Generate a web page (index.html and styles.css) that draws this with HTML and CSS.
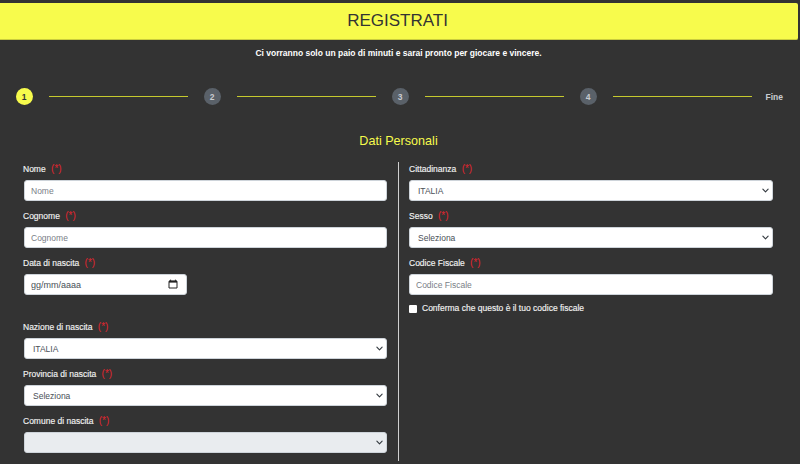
FILE: index.html
```html
<!DOCTYPE html>
<html lang="it">
<head>
<meta charset="utf-8">
<title>Registrati</title>
<link rel="stylesheet" href="styles.css">
</head>
<body>
<header class="banner"><h1 class="banner-title">REGISTRATI</h1></header>
<p class="intro">Ci vorranno solo un paio di minuti e sarai pronto per giocare e vincere.</p>
<ol class="steps">
  <li class="step step-active">1</li><li class="line"></li>
  <li class="step">2</li><li class="line"></li>
  <li class="step">3</li><li class="line"></li>
  <li class="step">4</li><li class="line"></li>
  <li class="step-end">Fine</li>
</ol>
<h2 class="section-title">Dati Personali</h2>
<form class="form">
  <div class="col col-left">
    <div class="field"><label class="label">Nome <span class="req">(*)</span></label><input class="control" placeholder="Nome"></div>
    <div class="field"><label class="label">Cognome <span class="req">(*)</span></label><input class="control" placeholder="Cognome"></div>
    <div class="field field-gap"><label class="label">Data di nascita <span class="req">(*)</span></label>
      <div class="date-wrap"><input class="control control-date" placeholder="gg/mm/aaaa">
        <svg class="cal" viewBox="0 0 10 10" width="10" height="10" aria-hidden="true"><path d="M1 2.2h8v6.8H1z" fill="none" stroke="#222" stroke-width="1"/><path d="M1 1.6h8v2H1z" fill="#222"/><path d="M2.6.6v1.4M7.4.6v1.4" stroke="#222" stroke-width=".9"/></svg>
      </div></div>
    <div class="field"><label class="label">Nazione di nascita <span class="req">(*)</span></label><select class="control select"><option>ITALIA</option></select></div>
    <div class="field"><label class="label">Provincia di nascita <span class="req">(*)</span></label><select class="control select"><option>Seleziona</option></select></div>
    <div class="field"><label class="label">Comune di nascita <span class="req">(*)</span></label><select class="control select select-off" disabled><option></option></select></div>
  </div>
  <div class="col col-right">
    <div class="field"><label class="label">Cittadinanza <span class="req">(*)</span></label><select class="control select"><option>ITALIA</option></select></div>
    <div class="field"><label class="label">Sesso <span class="req">(*)</span></label><select class="control select"><option>Seleziona</option></select></div>
    <div class="field"><label class="label">Codice Fiscale <span class="req">(*)</span></label><input class="control" placeholder="Codice Fiscale"></div>
    <label class="check"><input type="checkbox" class="check-box"><span>Conferma che questo è il tuo codice fiscale</span></label>
  </div>
</form>
</body>
</html>
```
FILE: styles.css
```css
* { box-sizing: border-box; }
html, body { margin: 0; height: 100%; overflow: hidden; }
body {
  background: #333333;
  color: #fff;
  font-family: "Liberation Sans", Arial, sans-serif;
  padding-top: 3px;
}
.banner {
  height: 37px;
  margin-right: 2px;
  background: #f7fb4c;
  border-bottom: 1px solid #c9cc3e;
  border-radius: 0 2px 2px 0;
  display: flex;
  align-items: center;
  justify-content: center;
}
.banner-title {
  margin: 0 3px 0 0;
  font-size: 17px;
  font-weight: 400;
  color: #333;
}
.intro {
  margin: 7px 3px 0 0;
  text-align: center;
  font-size: 8.5px;
  line-height: 12px;
  font-weight: 700;
}
.steps {
  list-style: none;
  margin: 29px 0 0;
  padding: 0 17px 0 15.5px;
  display: flex;
  align-items: center;
  height: 17px;
}
.step {
  width: 17px;
  height: 17px;
  flex: none;
  border-radius: 50%;
  background: #5a6169;
  color: #c9ccd0;
  font-size: 8.5px;
  font-weight: 700;
  display: flex;
  align-items: center;
  justify-content: center;
}
.step-active { background: #f7fb4c; color: #333; }
.line {
  flex: 1;
  height: 1px;
  margin: 0 16px;
  background: #c6ca2e;
}
.step-end {
  flex: none;
  margin-left: -2px;
  font-size: 8.5px;
  font-weight: 700;
  color: #c9ccd0;
}
.section-title {
  margin: 28px 3px 0 0;
  text-align: center;
  font-size: 12.6px;
  line-height: 17px;
  font-weight: 400;
  color: #f7fb4c;
}
.form {
  display: grid;
  grid-template-columns: 376px 1fr;
  margin-top: 12px;
  padding: 0 27px 0 23px;
}
.col { min-width: 0; height: 299px; }
.col-left { padding: 0 11px 0 1px; border-right: 1px solid #cfcfcf; }
.col-right { padding-left: 10px; }
.field { display: flex; flex-direction: column; height: 47px; }
.field-gap { height: 64px; }
.label {
  display: block;
  height: 26px;
  margin-left: -1px;
  font-size: 8.5px;
  line-height: 14px;
  color: #f2f2f2;
  -webkit-text-stroke: 0.15px #f2f2f2;
}
.col-right .label { margin-left: 0; }
.req { color: #e0252f; font-size: 10px; margin-left: 3px; -webkit-text-stroke: 0; }
.control {
  display: block;
  width: 100%;
  height: 21px;
  flex: none;
  margin-top: -8px;
  padding: 0 6px;
  border: 1px solid #ced4da;
  border-radius: 3px;
  background: #fff;
  color: #495057;
  font-family: inherit;
  font-size: 8.5px;
  outline: none;
}
.control::placeholder { color: #7a8087; opacity: 1; }
.date-wrap { position: relative; width: 163px; margin-top: -8px; }
.control-date { margin-top: 0; font-size: 9px; }
.control-date::placeholder { color: #495057; }
.cal { position: absolute; right: 9px; top: 5px; }
.select {
  appearance: none;
  padding: 0 20px 0 8px;
  background-image: url("data:image/svg+xml,%3Csvg xmlns='http://www.w3.org/2000/svg' viewBox='0 0 16 16'%3E%3Cpath fill='none' stroke='%23343a40' stroke-linecap='round' stroke-linejoin='round' stroke-width='2.6' d='M2 5l6 6 6-6'/%3E%3C/svg%3E");
  background-repeat: no-repeat;
  background-position: right 3px center;
  background-size: 7px 7px;
}
.select-off { background-color: #e9ecef; opacity: 1; }
.check {
  display: flex;
  align-items: flex-start;
  margin-top: -1px;
  font-size: 8.5px;
  line-height: 12px;
  color: #f2f2f2;
  -webkit-text-stroke: 0.15px #f2f2f2;
}
.check-box {
  appearance: none;
  width: 8px;
  height: 8px;
  margin: 3px 5px 0 0;
  background: #fff;
  border-radius: 1px;
  flex: none;
}
```
